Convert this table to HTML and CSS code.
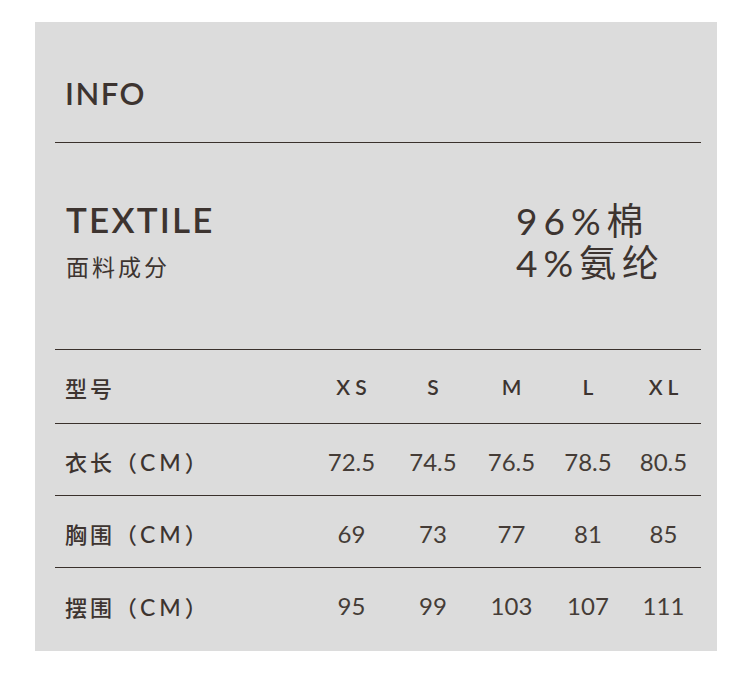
FILE: index.html
```html
<!DOCTYPE html>
<html lang="zh-CN">
<head>
<meta charset="utf-8">
<title>INFO</title>
<link rel="stylesheet" href="styles.css">
</head>
<body>
<div class="panel">
  <div class="info-head"><h1 class="info-title">INFO</h1></div>
  <div class="textile">
    <div class="textile-left">
      <div class="textile-title">TEXTILE</div>
      <div class="textile-sub">面料成分</div>
    </div>
    <div class="textile-right">
      <div class="comp">96%棉</div>
      <div class="comp">4%氨纶</div>
    </div>
  </div>
  <div class="size-table">
    <div class="row head">
      <div class="label">型号</div>
      <div class="cell size">XS</div>
      <div class="cell size">S</div>
      <div class="cell size">M</div>
      <div class="cell size">L</div>
      <div class="cell size">XL</div>
    </div>
    <div class="row">
      <div class="label">衣长（<span class="unit">CM</span>）</div>
      <div class="cell">72.5</div>
      <div class="cell">74.5</div>
      <div class="cell">76.5</div>
      <div class="cell">78.5</div>
      <div class="cell">80.5</div>
    </div>
    <div class="row">
      <div class="label">胸围（<span class="unit">CM</span>）</div>
      <div class="cell">69</div>
      <div class="cell">73</div>
      <div class="cell">77</div>
      <div class="cell">81</div>
      <div class="cell">85</div>
    </div>
    <div class="row last">
      <div class="label">摆围（<span class="unit">CM</span>）</div>
      <div class="cell">95</div>
      <div class="cell">99</div>
      <div class="cell">103</div>
      <div class="cell">107</div>
      <div class="cell">111</div>
    </div>
  </div>
</div>
</body>
</html>
```
FILE: styles.css
```css
* { box-sizing: border-box; }
body {
  margin: 0;
  background: #ffffff;
  font-family: "Lato", "Noto Sans CJK SC", sans-serif;
  color: #3d3430;
}
.panel {
  margin: 22px 0 0 35px;
  width: 682px;
  height: 629px;
  background: #dcdcdc;
  padding: 0 16px 0 20px;
}
.info-head {
  height: 121px;
  padding: 56px 0 0 10px;
  border-bottom: 1px solid #3a312c;
}
.info-title {
  margin: 0;
  font-size: 31px;
  line-height: 30px;
  font-weight: 600;
  letter-spacing: 1.5px;
}
.textile {
  height: 207px;
  border-bottom: 1px solid #3a312c;
  display: grid;
  grid-template-columns: 461px 1fr;
}
.textile-left {
  padding: 59px 0 0 11px;
}
.textile-title {
  font-size: 35px;
  line-height: 35px;
  font-weight: 600;
  letter-spacing: 2.2px;
}
.textile-sub {
  margin-top: 18px;
  font-family: "Noto Sans CJK SC", sans-serif;
  font-size: 23px;
  line-height: 23px;
  letter-spacing: 3px;
}
.textile-right {
  padding-top: 57px;
}
.comp {
  font-size: 37px;
  line-height: 42px;
  font-weight: 400;
  letter-spacing: 6px;
}
.row {
  display: grid;
  grid-template-columns: 255px 83px 80px 77px 76px 75px;
  align-items: center;
  height: 72px;
  padding-top: 3px;
  border-bottom: 1px solid #3a312c;
}
.row.head {
  height: 74px;
  padding-top: 0;
}
.row.last {
  border-bottom: none;
}
.label {
  padding-left: 10px;
  font-size: 22px;
  letter-spacing: 3px;
  font-weight: 500;
  white-space: nowrap;
}
.unit {
  font-size: 23px;
  font-weight: 500;
  letter-spacing: 4px;
}
.cell {
  text-align: center;
  font-size: 24px;
  font-weight: 400;
  color: #453c37;
}
.cell.size {
  font-size: 21px;
  font-weight: 600;
  letter-spacing: 5px;
  text-indent: 5px;
  color: #3d3430;
}
```
